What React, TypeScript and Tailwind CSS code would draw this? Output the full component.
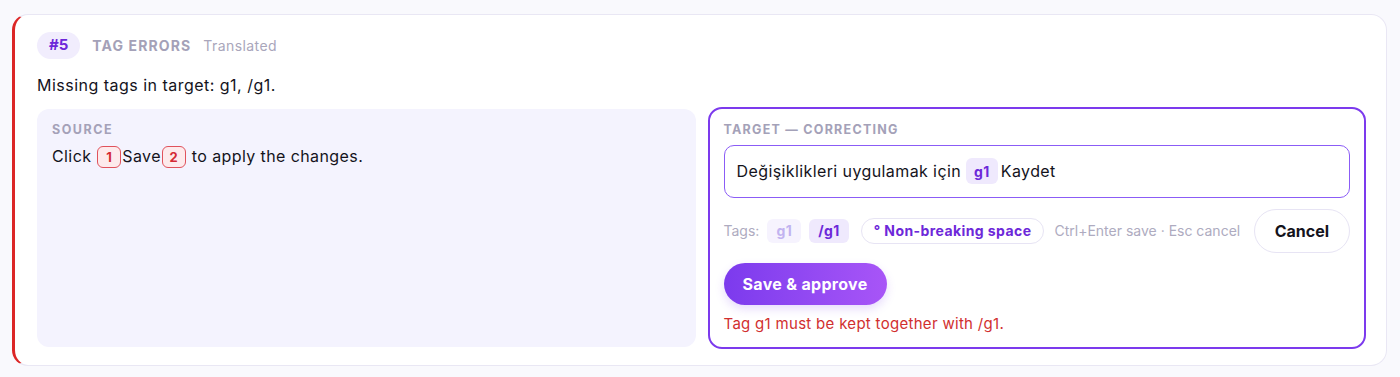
import React from "react";

const font = { fontFamily: "Inter, 'Noto Sans', sans-serif" };

function SrcTag({ n }: { n: string }) {
  return (
    <span className="mx-[1px] inline-flex h-[22px] min-w-[24px] items-center justify-center rounded-[6px] border border-[#e0525c] bg-[#fdeaec] px-[6px] align-middle text-[13px] font-bold text-[#d42a35]">
      {n}
    </span>
  );
}

function Chip({ label, faded }: { label: string; faded?: boolean }) {
  return (
    <span
      className={
        "inline-flex h-[24px] items-center rounded-[6px] px-[9px] text-[14px] font-bold tracking-[0.03em] " +
        (faded ? "bg-[#f6f3fe] text-[#c2b3f0]" : "bg-[#efe9fd] text-[#6d28d9]")
      }
    >
      {label}
    </span>
  );
}

export default function App() {
  return (
    <div className="min-h-[377px] bg-[#f9f9fd] pl-3 pr-[13px] pt-[14px]" style={font}>
      <div className="rounded-[16px] border border-[#e9e7f4] border-l-[3px] border-l-[#dc2626] bg-white pb-4 pl-[22px] pr-5 pt-[17px]">
        <div className="flex items-center gap-3">
          <span className="inline-flex h-[27px] items-center rounded-full bg-[#f1edfd] px-[12px] text-[15px] font-bold text-[#6d28d9]">
            #5
          </span>
          <span className="text-[14px] font-bold uppercase tracking-[0.08em] text-[#a4a1b8]">
            Tag errors
          </span>
          <span className="text-[14px] tracking-[0.03em] text-[#a9a6bb]">Translated</span>
        </div>

        <p className="mt-[14px] text-[16px] tracking-[0.03em] text-[#14131c]">
          Missing tags in target: g1, /g1.
        </p>

        <div className="mt-[10px] grid grid-cols-2 gap-3">
          <div className="my-[2px] rounded-[12px] bg-[#f4f3fe] px-[15px] pt-[12px]">
            <div className="text-[12.5px] font-bold uppercase tracking-[0.12em] text-[#a4a1b8]">
              Source
            </div>
            <div className="mt-[3px] text-[16px] leading-[26px] tracking-[0.025em] text-[#14131c]">
              Click <SrcTag n="1" />Save<SrcTag n="2" /> to apply the changes.
            </div>
          </div>

          <div className="rounded-[14px] border-2 border-[#7c3aed] px-[14px] pb-[12px] pt-[12px]">
            <div className="text-[12.5px] font-bold uppercase tracking-[0.1em] text-[#a4a1b8]">
              Target — correcting
            </div>
            <div className="mt-[5px] flex h-[53px] items-center rounded-[10px] border-[1.5px] border-[#8b5cf6] px-[12px] text-[16px] tracking-[0.025em] text-[#14131c]">
              Değişiklikleri uygulamak için
              <span className="ml-[5px] mr-[3px] inline-flex h-[26px] items-center rounded-[6px] bg-[#efe9fd] px-[8px] text-[14px] font-bold tracking-[0.03em] text-[#6d28d9]">
                g1
              </span>
              Kaydet
            </div>

            <div className="mt-[11px] flex items-center gap-2">
              <span className="text-[14px] text-[#aeabc0]">Tags:</span>
              <Chip label="g1" faded />
              <Chip label="/g1" />
              <span className="ml-1 inline-flex h-[26px] items-center rounded-full border border-[#e7e4f4] px-[12px] text-[14px] font-bold tracking-[0.03em] text-[#6d28d9]">
                ° Non-breaking space
              </span>
              <span className="ml-[2px] text-[14px] text-[#aeabc0]">
                Ctrl+Enter save · Esc cancel
              </span>
              <button className="ml-auto h-[44px] rounded-full border border-[#e7e4f4] bg-white px-[20px] text-[16px] font-bold text-[#14131c]">
                Cancel
              </button>
            </div>

            <button className="mt-[10px] h-[42px] rounded-full bg-gradient-to-r from-[#7c3aed] to-[#a855f7] px-[19px] text-[16px] font-bold tracking-[0.02em] text-white shadow-[0_4px_10px_rgba(124,58,237,0.18)]">
              Save &amp; approve
            </button>

            <p className="mt-[8px] text-[15px] tracking-[0.02em] text-[#d12f2f]">
              Tag g1 must be kept together with /g1.
            </p>
          </div>
        </div>
      </div>
    </div>
  );
}
